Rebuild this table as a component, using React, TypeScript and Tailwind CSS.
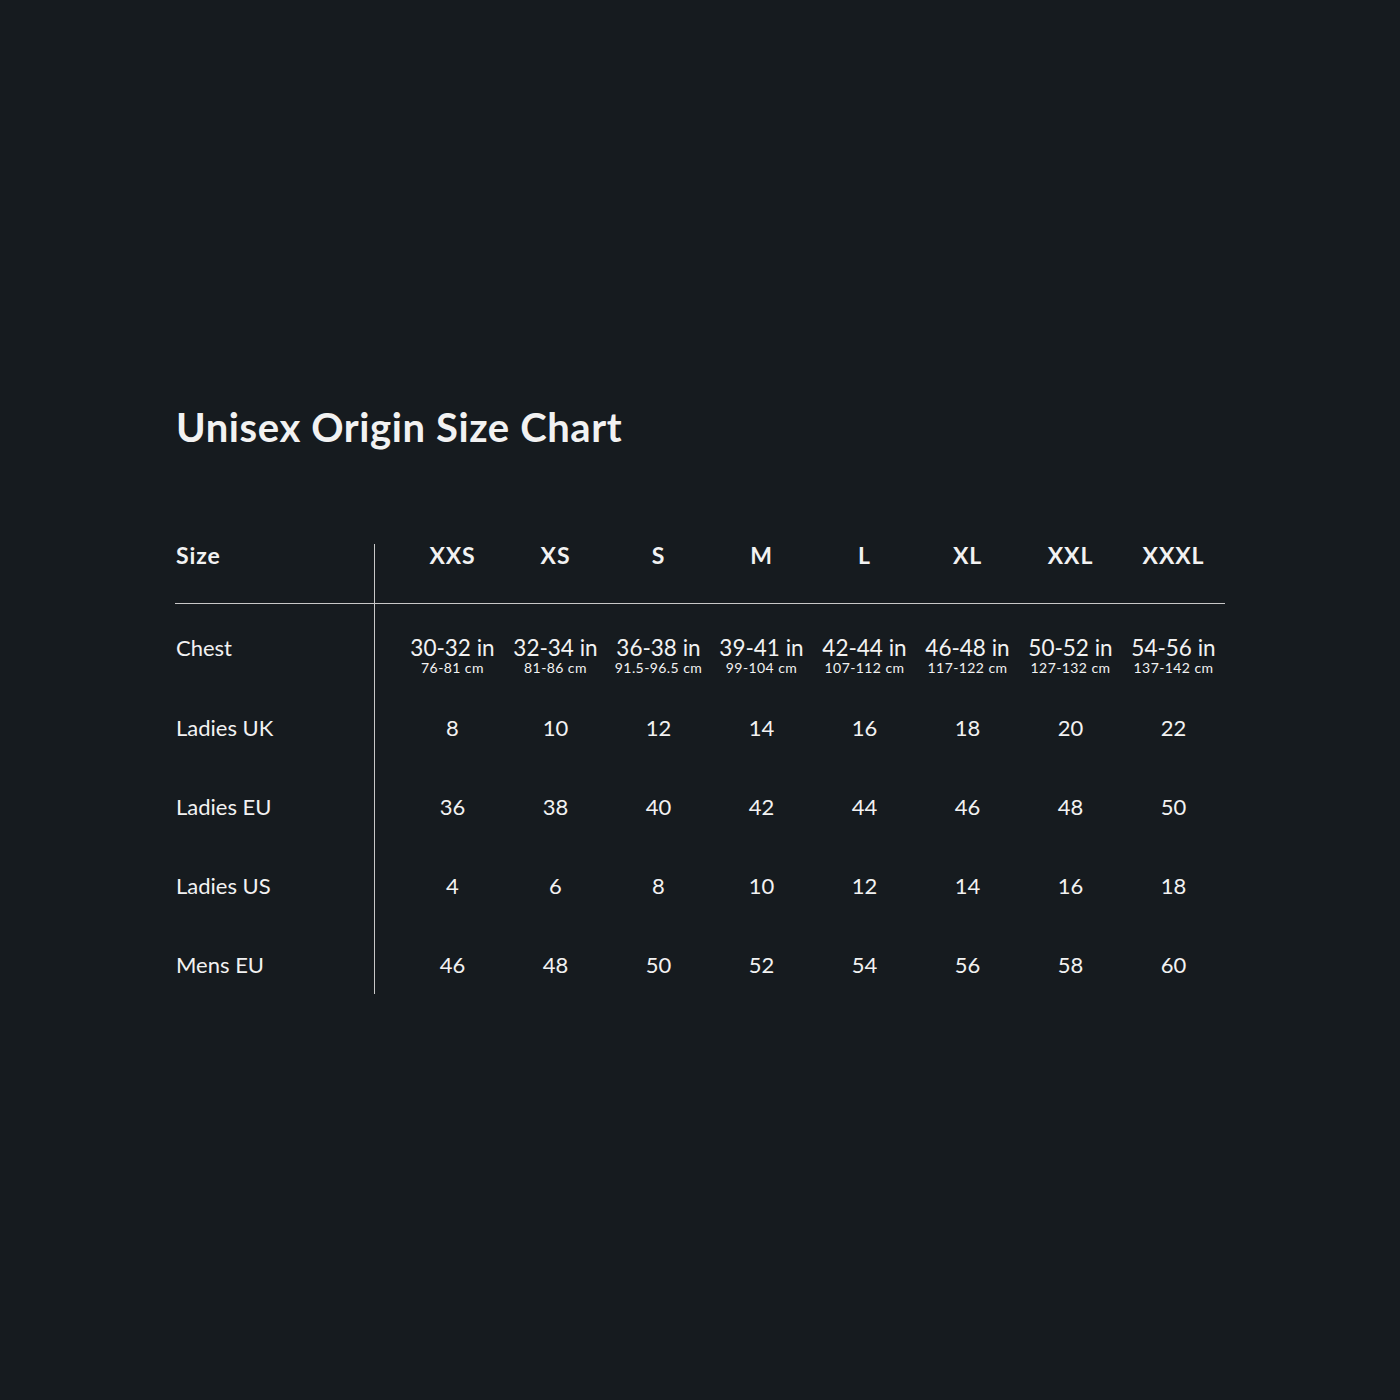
const sizes = ['XXS', 'XS', 'S', 'M', 'L', 'XL', 'XXL', 'XXXL']

const chest = [
  ['30-32 in', '76-81 cm'],
  ['32-34 in', '81-86 cm'],
  ['36-38 in', '91.5-96.5 cm'],
  ['39-41 in', '99-104 cm'],
  ['42-44 in', '107-112 cm'],
  ['46-48 in', '117-122 cm'],
  ['50-52 in', '127-132 cm'],
  ['54-56 in', '137-142 cm'],
]

const rows: [string, string[]][] = [
  ['Ladies UK', ['8', '10', '12', '14', '16', '18', '20', '22']],
  ['Ladies EU', ['36', '38', '40', '42', '44', '46', '48', '50']],
  ['Ladies US', ['4', '6', '8', '10', '12', '14', '16', '18']],
  ['Mens EU', ['46', '48', '50', '52', '54', '56', '58', '60']],
]

export default function App() {
  return (
    <div className="w-full h-[1400px] bg-[#161b1f] text-[#f2f2f2] pt-[402px] pl-[175px] font-['Lato','Liberation_Sans',sans-serif]">
      <h1 className="text-[40px] leading-[50px] font-bold tracking-[0.015em] pl-px">Unisex Origin Size Chart</h1>

      <div className="mt-[92px] w-[1050px]">
        {/* header */}
        <div className="flex h-[59px]">
          <div className="w-[199px] pl-px text-[23px] leading-[22px] font-bold tracking-[0.04em]">Size</div>
          <div className="flex border-l border-[#c8c8c8] pl-[26px]">
            {sizes.map((s) => (
              <div key={s} className="w-[103px] text-center text-[23px] leading-[22px] font-bold tracking-[0.04em]">
                {s}
              </div>
            ))}
          </div>
        </div>

        <div className="h-px bg-[#c8c8c8]" />

        {/* chest */}
        <div className="flex h-[85px]">
          <div className="w-[199px] pl-px pt-[32px] text-[22px] leading-[24px]">Chest</div>
          <div className="flex border-l border-[#c8c8c8] pl-[26px] pt-[32px]">
            {chest.map(([inch, cm]) => (
              <div key={inch} className="w-[103px] flex flex-col items-center whitespace-nowrap">
                <span className="text-[22.5px] leading-[24px]">{inch}</span>
                <span className="text-[14px] leading-[16px] tracking-[0.03em]">{cm}</span>
              </div>
            ))}
          </div>
        </div>

        {rows.map(([label, vals], i) => (
          <div key={label} className={'flex ' + (i === rows.length - 1 ? 'h-[68px]' : 'h-[79px]')}>
            <div className="w-[199px] pl-px pt-[27px] text-[22px] leading-[24px]">{label}</div>
            <div className="flex border-l border-[#c8c8c8] pl-[26px] pt-[27px]">
              {vals.map((v, j) => (
                <div key={j} className="w-[103px] text-center text-[22px] leading-[24px]">
                  {v}
                </div>
              ))}
            </div>
          </div>
        ))}
      </div>
    </div>
  )
}
